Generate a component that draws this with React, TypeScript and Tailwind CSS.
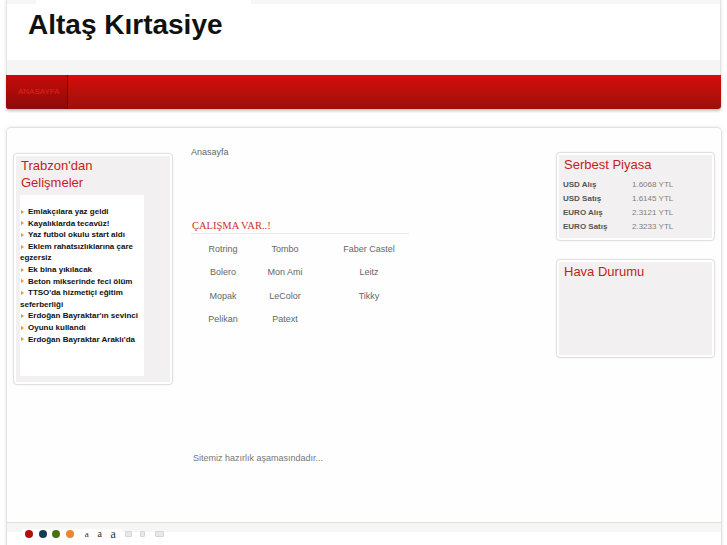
import React from 'react';

const news = [
  'Emlakçılara yaz geldi',
  'Kayalıklarda tecavüz!',
  'Yaz futbol okulu start aldı',
  'Eklem rahatsızlıklarına çare egzersiz',
  'Ek bina yıkılacak',
  'Beton mikserinde feci ölüm',
  "TTSO'da hizmetiçi eğitim seferberliği",
  "Erdoğan Bayraktar'ın sevinci",
  'Oyunu kullandı',
  "Erdoğan Bayraktar Araklı'da",
];

const brands = [
  ['Rotring', 'Tombo', 'Faber Castel'],
  ['Bolero', 'Mon Ami', 'Leitz'],
  ['Mopak', 'LeColor', 'Tikky'],
  ['Pelikan', 'Patext', ''],
];

const rates = [
  ['USD Alış', '1.6068 YTL'],
  ['USD Satış', '1.6145 YTL'],
  ['EURO Alış', '2.3121 YTL'],
  ['EURO Satış', '2.3233 YTL'],
];

const Box: React.FC<{ title: React.ReactNode; className: string; children?: React.ReactNode }> = ({ title, className, children }) => (
  <div className={`border border-[#e0e0e0] rounded-[4px] bg-white p-[2px] shadow-[0_0_2px_rgba(0,0,0,0.08)] ${className}`}>
    <div className="bg-[#f2f0f0] h-full pt-[1px]">
      <h3 className="text-[13px] leading-[17px] text-[#c41e1e] pl-[5px]">{title}</h3>
      {children}
    </div>
  </div>
);

export default function App() {
  return (
    <div className="w-[727px] h-[545px] overflow-hidden bg-white font-['Liberation_Sans',Arial,sans-serif]">
      {/* header */}
      <div className="ml-[6px] w-[715px] border-x border-[#e4e4e4] shadow-[0_0_3px_rgba(0,0,0,0.12)]">
        <div className="flex h-[4px]">
          <div className="w-[29px] bg-[#f6f6f4]" />
          <div className="w-[215px] bg-white" />
          <div className="flex-1 bg-[#f6f6f4]" />
        </div>
        <div className="h-[56px] bg-white pt-[5px] pl-[21px]">
          <h1 className="text-[28px] leading-[32px] font-bold text-[#111]">Altaş Kırtasiye</h1>
        </div>
        <div className="h-[15px] bg-[#f5f5f3]" />
      </div>
      <div className="ml-[6px] w-[715px] h-[34px] rounded-b-[3px] bg-gradient-to-b from-[#d60c0c] to-[#9c100a] shadow-[0_2px_3px_rgba(0,0,0,0.25)] flex">
        <div className="w-[62px] h-full rounded-bl-[3px] bg-gradient-to-b from-[#c80a0a] to-[#8c0b08] border-r border-[#6e0606] flex items-center pl-[12px]">
          <span className="text-[8px] text-[#e2231a]">ANASAYFA</span>
        </div>
      </div>

      {/* main */}
      <div className="ml-[6px] mt-[18px] w-[716px] border border-[#e2e2e2] rounded-t-[5px] shadow-[0_0_3px_rgba(0,0,0,0.12)]">
        <div className="h-[394px] flex items-start bg-[#fefefe] rounded-t-[5px]">
          {/* left */}
          <Box className="ml-[6px] mt-[25px] w-[160px] h-[232px] shrink-0" title={<>Trabzon'dan<br />Gelişmeler</>}>
            <div className="ml-[4px] mt-[4px] w-[124px] h-[181px] bg-white pt-[11px]">
              {news.map((n) => (
                <p key={n} className="text-[8px] leading-[11.6px] font-bold text-[#111]">
                  <span className="inline-block w-[8px] pl-[1px] align-middle">
                    <span className="block w-0 h-0 border-y-[2.5px] border-y-transparent border-l-[3px] border-l-[#f39220]" />
                  </span>
                  {n}
                </p>
              ))}
            </div>
          </Box>

          {/* center */}
          <div className="ml-[18px] mt-[18px] w-[230px] shrink-0">
            <p className="text-[9px] leading-[12px] text-[#666]">Anasayfa</p>
            <div className="mt-[61px] w-[218px] border-b border-[#ececec]">
              <h2 className="font-['Liberation_Serif',serif] text-[10.5px] leading-[14px] text-[#cc3030] pl-[1px]">ÇALIŞMA VAR..!</h2>
            </div>
            <div className="mt-[4px] grid grid-cols-[64px_60px_108px]">
              {brands.flat().map((b, i) => (
                <div key={i} className="h-[23.4px] flex items-center justify-center text-[9px] text-[#666]">
                  {b}
                </div>
              ))}
            </div>
            <p className="mt-[120px] pl-[2px] text-[9px] leading-[12px] text-[#777]">Sitemiz hazırlık aşamasındadır...</p>
          </div>

          {/* right */}
          <div className="ml-auto mr-[6px] mt-[24px] w-[159px] shrink-0 flex flex-col gap-[18px]">
            <Box className="h-[89px]" title="Serbest Piyasa">
              <div className="mt-[5px] pl-[4px]">
                {rates.map(([k, v]) => (
                  <div key={k} className="flex h-[14px] items-center text-[8px]">
                    <span className="w-[69px] font-bold text-[#555]">{k}</span>
                    <span className="text-[#808080]">{v}</span>
                  </div>
                ))}
              </div>
            </Box>
            <Box className="h-[99px]" title="Hava Durumu" />
          </div>
        </div>

        {/* footer */}
        <div className="border-t border-[#e2dfdb] h-[10px] bg-[#f6f6f4]" />
        <div className="flex items-center h-[9px] -mt-[3px]">
          <div className="ml-[15px] bg-white flex items-center h-full pl-[3px] pr-[6px] gap-[5.7px]">
            <span className="w-[8px] h-[8px] rounded-full bg-[#b80c0c]" />
            <span className="w-[8px] h-[8px] rounded-full bg-[#143c55]" />
            <span className="w-[8px] h-[8px] rounded-full bg-[#4b7012]" />
            <span className="w-[8px] h-[8px] rounded-full bg-[#e88a2c]" />
            <span className="ml-[5px] font-['Liberation_Serif',serif] text-[9px] leading-[8px] text-[#333]">a</span>
            <span className="ml-[3px] font-['Liberation_Serif',serif] text-[10px] leading-[8px] text-[#333]">a</span>
            <span className="ml-[3px] font-['Liberation_Serif',serif] text-[12px] leading-[8px] text-[#333]">a</span>
          </div>
          <div className="flex gap-[8px] items-center">
            <span className="ml-[3px] w-[7px] h-[6px] rounded-[1px] bg-[#e8e8e8] border border-[#d6d6d6]" />
            <span className="w-[5px] h-[6px] rounded-[1px] bg-[#e8e8e8] border border-[#d6d6d6]" />
            <span className="ml-[2px] w-[9px] h-[6px] rounded-[1px] bg-[#e8e8e8] border border-[#d6d6d6]" />
          </div>
        </div>
        <div className="h-[10px] bg-white" />
      </div>
    </div>
  );
}
